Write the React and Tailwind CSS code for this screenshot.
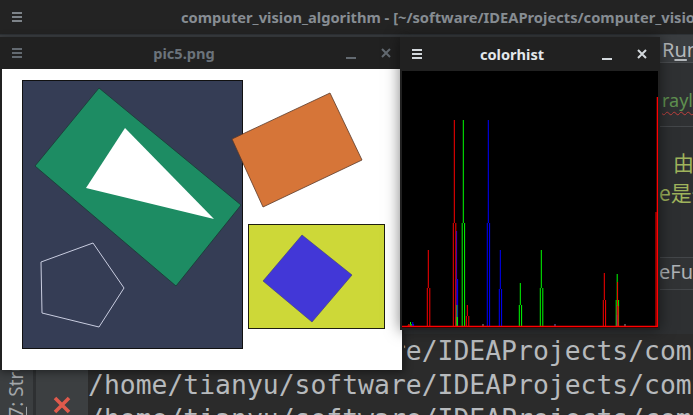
const spikes = [
  // blue first, then green, then red (red ends up on top like OpenCV draws it)
  { c: "#0000ff", x: 456.6, top: 231, box: 279, l: 456.2, r: 457.6 },
  { c: "#0000ff", x: 488.3, top: 120, box: 223, l: 487.3, r: 489.6 },
  { c: "#0000ff", x: 500.3, top: 250, box: 289, l: 499.3, r: 501.6 },
  { c: "#0000ff", x: 617.0, top: 305, box: 315, l: 616.6, r: 617.6 },
  { c: "#0000ff", x: 412.8, top: 322, box: 324, l: 412.3, r: 413.6 },
  { c: "#00ff00", x: 456.8, top: 305, box: 317, l: 456.3, r: 457.4 },
  { c: "#00ff00", x: 463.3, top: 120, box: 223, l: 462.2, r: 464.6 },
  { c: "#00ff00", x: 520.3, top: 283, box: 305, l: 519.3, r: 521.6 },
  { c: "#00ff00", x: 541.3, top: 250, box: 288, l: 540.3, r: 542.8 },
  { c: "#00ff00", x: 617.2, top: 274, box: 300, l: 616.2, r: 618.6 },
  { c: "#00ff00", x: 410.5, top: 322, box: 324, l: 410.2, r: 411.2 },
  { c: "#ff0000", x: 428.3, top: 250, box: 288, l: 427.3, r: 429.8 },
  { c: "#ff0000", x: 454.3, top: 120, box: 223, l: 453.3, r: 455.8 },
  { c: "#ff0000", x: 467.3, top: 305, box: 316, l: 466.3, r: 468.8 },
  { c: "#ff0000", x: 604.3, top: 273, box: 300, l: 603.3, r: 605.6 },
  { c: "#ff0000", x: 617.6, top: 282, box: 306, l: 617.2, r: 618.2 },
  { c: "#ff0000", x: 408.8, top: 324, box: 325, l: 408.2, r: 410.0 },
];

function Hamburger({ tone, className = "" }) {
  return (
    <div className={`flex flex-col gap-[2px] ${className}`}>
      <span className={`block w-[10px] h-[2px] ${tone}`} />
      <span className={`block w-[10px] h-[2px] ${tone}`} />
      <span className={`block w-[10px] h-[2px] ${tone}`} />
    </div>
  );
}

function TitleBar({ title, active }) {
  const tone = active ? "bg-[#d3d8dc]" : "bg-[#636a71]";
  const text = active ? "text-[#e3e8ec]" : "text-[#6b737b]";
  const stroke = active ? "#d3d8dc" : "#636a71";
  return (
    <div className="flex items-center h-full">
      <Hamburger tone={tone} className="ml-[12px]" />
      <div className={`flex-1 text-center text-[14.6px] font-bold leading-none ${text}`}>
        {title}
      </div>
      <span className={`block w-[10px] h-[2px] mt-[9px] ${tone}`} />
      <svg width="10" height="10" viewBox="0 0 10 10" className="ml-[25px] mr-[13px]">
        <path d="M1 1 L9 9 M9 1 L1 9" stroke={stroke} strokeWidth="2" />
      </svg>
    </div>
  );
}

function ShapesImage() {
  return (
    <svg width="400" height="301" viewBox="0 0 400 301">
      <g transform="translate(-2,-69)">
        <rect x="22.5" y="80.5" width="220" height="268" fill="#353d55" stroke="#111" strokeWidth="1" />
        <polygon points="99,88 241,205 176,286 35,166" fill="#1d8c63" stroke="#1a3a35" strokeWidth="0.8" />
        <polygon points="125,128 214,219 86,188" fill="#ffffff" />
        <polygon
          points="41,262 93,243 124,288 99,327 42,313"
          fill="none"
          stroke="#c9cde0"
          strokeWidth="1"
        />
        <polygon points="330,93 362,160 263,207 232,139" fill="#d67538" stroke="#5a3a2a" strokeWidth="0.8" />
        <rect x="248.5" y="224.5" width="136" height="104" fill="#cdd838" stroke="#1e1e10" strokeWidth="1" />
        <polygon points="302,235 352,275 312,322 263,281" fill="#4237d7" stroke="#3a3a80" strokeWidth="0.6" />
      </g>
    </svg>
  );
}

function Histogram() {
  return (
    <svg width="256" height="257" viewBox="0 0 256 257">
      <g transform="translate(-402,-71)" strokeWidth="1" fill="none">
        {spikes.map((s, i) => (
          <path
            key={i}
            d={`M${s.l} 326 V${s.box} M${s.r} 326 V${s.box} M${s.x} ${s.box} V${s.top}`}
            stroke={s.c}
          />
        ))}
        <rect x="482.5" y="324" width="1" height="2" fill="#9a9a9a" stroke="none" />
        <rect x="554.5" y="324" width="1" height="2" fill="#7070c0" stroke="none" />
        <rect x="624.5" y="324" width="1" height="2" fill="#9a9a9a" stroke="none" />
        <path d="M402 326.5 H657.5 V97" stroke="#ff0000" strokeWidth="1.6" />
        <path d="M656 326 V212" stroke="#ff0000" strokeWidth="1" />
      </g>
    </svg>
  );
}

export default function App() {
  return (
    <div className="relative w-[693px] h-[415px] overflow-hidden bg-[#2b2b2b] font-['Noto_Sans',sans-serif]">
      {/* IDE in the background */}
      <div className="flex flex-col h-full">
        <div className="h-[35px] shrink-0 bg-[#232323] border-b border-[#2e3236] flex items-center">
          <Hamburger tone="bg-[#7d8389]" className="ml-[12px]" />
          <span className="ml-[159px] whitespace-nowrap text-[14.7px] font-bold text-[#878d93]">
            computer_vision_algorithm - [~/software/IDEAProjects/computer_vision_algorithm] - IntelliJ IDEA
          </span>
        </div>

        <div className="h-[299px] shrink-0 flex flex-col whitespace-nowrap overflow-hidden">
          <div className="h-[28px] shrink-0 bg-[#3a3d40] border-b border-[#4a4d50] pl-[662px] pt-[1px] text-[20px] leading-[27px] text-[#b4b8bc]">
            R<span className="underline underline-offset-2">u</span>n
          </div>
          <div className="h-[64px] shrink-0 bg-[#2f3133] border-b border-[#44474a] pl-[662px] flex items-end pb-[17px] text-[18px] leading-none text-[#5f9150]">
            <span className="underline decoration-wavy decoration-[#c0403c] decoration-1 underline-offset-4">
              raylmage
            </span>
          </div>
          <div className="h-[131px] shrink-0 bg-[#2d2f31] border-b border-[#44474a] flex flex-col pt-[22px] gap-[4px] font-['Noto_Sans_CJK_SC',sans-serif] text-[21px] leading-[26px] text-[#9fb35c]">
            <span className="pl-[673px]">由于</span>
            <span className="pl-[659px]">e是一个</span>
          </div>
          <div className="h-[32px] shrink-0 bg-[#313335] border-b border-[#44474a] pl-[659px] pt-[1px] text-[20px] leading-[26px] text-[#aeb2b6]">
            eFunction
          </div>
          <div className="flex-1 bg-[#2e3032]" />
        </div>

        <div className="flex-1 min-h-0 overflow-hidden flex">
          <div className="w-[33px] shrink-0 bg-[#3b3e40] flex flex-col justify-end items-center">
            <span className="[writing-mode:vertical-rl] rotate-180 text-[19px] leading-none text-[#a3a6a9] whitespace-nowrap mb-[-3px]">
              <span className="underline">7</span>: Structure
            </span>
          </div>
          <div className="w-[3px] shrink-0 bg-[#2e3032]" />
          <div className="w-[52px] shrink-0 bg-[#3c3f41] pl-[16px] pt-[61px]">
            <svg width="20" height="20" viewBox="0 0 20 20">
              <path d="M3 3 L17 17 M17 3 L3 17" stroke="#df5a4c" strokeWidth="3.6" />
            </svg>
          </div>
          <div className="flex-1 flex flex-col whitespace-nowrap font-['DejaVu_Sans_Mono',monospace] text-[26.4px] leading-[34px] text-[#b7babd]">
            <span>/home/tianyu/software/IDEAProjects/computer</span>
            <span>/home/tianyu/software/IDEAProjects/computer</span>
            <span>/home/tianyu/software/IDEAProjects/computer</span>
          </div>
        </div>
      </div>

      {/* pic5.png window */}
      <div className="absolute left-0 top-[37px] w-[404px] h-[333px] bg-[#212121] shadow-[0_2px_8px_rgba(0,0,0,0.45)] flex flex-col">
        <div className="h-[32px] shrink-0">
          <TitleBar title="pic5.png" active={false} />
        </div>
        <div className="mx-[2px] h-[301px] bg-white">
          <ShapesImage />
        </div>
      </div>

      {/* colorhist window */}
      <div className="absolute left-[400px] top-[37px] w-[260px] h-[293px] bg-[#212121] shadow-[0_0_14px_rgba(0,0,0,0.5)] flex flex-col">
        <div className="h-[34px] shrink-0">
          <TitleBar title="colorhist" active={true} />
        </div>
        <div className="mx-[2px] h-[257px] bg-black">
          <Histogram />
        </div>
      </div>
    </div>
  );
}
